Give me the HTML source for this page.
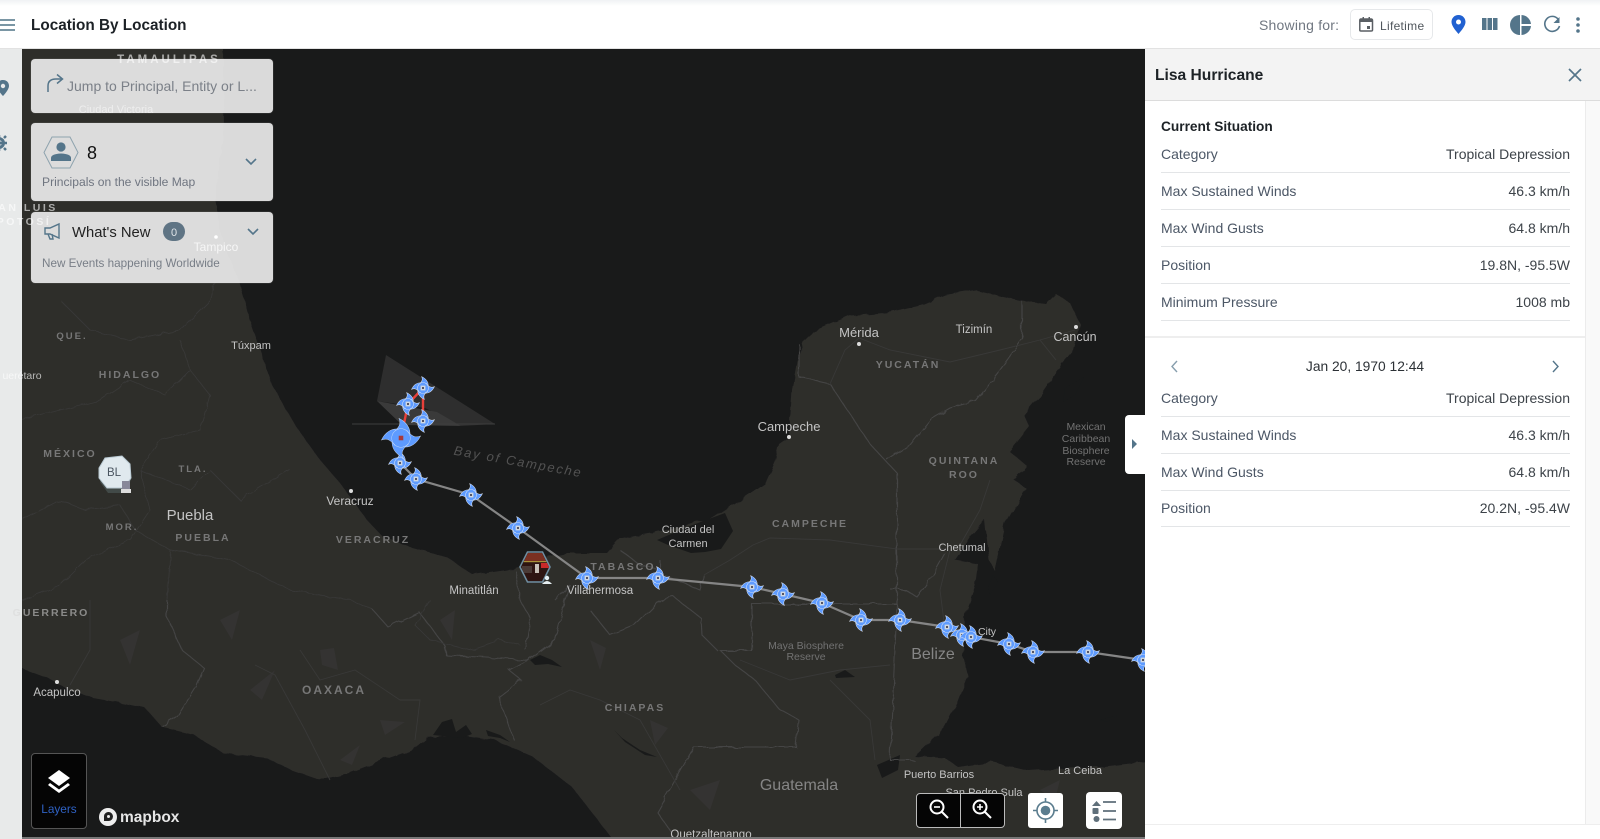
<!DOCTYPE html>
<html><head><meta charset="utf-8"><title>Location By Location</title>
<style>
html,body{margin:0;padding:0;width:1600px;height:839px;overflow:hidden;background:#fff;font-family:"Liberation Sans",sans-serif}
.a{position:absolute}
.t{position:absolute;white-space:nowrap;line-height:18px}
.panel{position:absolute;left:31px;width:242px;background:rgba(240,240,240,.9);border-radius:4px;box-shadow:0 0 1px #888}
.lb{position:absolute;left:1161px;font-size:14px;color:#4c5766;line-height:18px;white-space:nowrap}
.vl{position:absolute;right:30px;font-size:14px;color:#3d4349;line-height:18px;white-space:nowrap;text-align:right}
.ln{position:absolute;left:1161px;width:409px;height:1px;background:#e3e5e7}
svg text{font-family:"Liberation Sans",sans-serif}
.c{fill:#c4c4c4;font-size:12px;text-anchor:middle}
.s{fill:#777;font-size:10.5px;font-weight:bold;letter-spacing:2px;text-anchor:middle}
.n{fill:#727272;font-size:10.5px;text-anchor:middle}
.g{fill:#858585;font-size:16px;text-anchor:middle}
.b{fill:none;stroke:#454545;stroke-width:1.1}
.f{fill:none;stroke:#393938;stroke-width:.9}
</style></head><body>

<svg class="a" style="left:0;top:0" width="1600" height="839" viewBox="0 0 1600 839">
<defs>
<filter id="jag" x="-2%" y="-2%" width="104%" height="104%"><feTurbulence type="fractalNoise" baseFrequency=".09" numOctaves="2" seed="4" result="n"/><feDisplacementMap in="SourceGraphic" in2="n" scale="5"/></filter>
<g id="h">
<g id="arm"><path d="M5,-1.500 C5.500,-5.500 3,-9 -1,-11 C0,-8.500 -.5,-6.500 -4,-3.500 Z"/></g>
<use href="#arm" transform="rotate(90)"/><use href="#arm" transform="rotate(180)"/><use href="#arm" transform="rotate(270)"/>
<circle r="5.200"/>
</g>
<g id="hz">
<use href="#h" fill="#5e9bff" stroke="#e3e9f2" stroke-width=".9" style="paint-order:stroke"/>
<rect x="-2.400" y="-2.400" width="4.800" height="4.800" fill="#cfd8e2"/><rect x="-1" y="-1" width="2" height="2" fill="#556"/>
</g>
<clipPath id="hexc"><path d="M521,567 L528,553 L542,553 L549,567 L542,581 L528,581 Z"/></clipPath>
</defs>
<rect x="22" y="49" width="1123" height="790" fill="#191a1a"/>
<!-- land -->
<path filter="url(#jag)" fill="#2e2d2c" d="M8,35 L223,35 L223,49 L224,130 L215,200 L222,240 L240,283 L250,320 L262,355 L272,385 L295,425 L320,460 L340,483 L367,520 L383,537 L410,547 L447,557 L473,575 L507,570 L547,557 L567,553 L607,553 L620,538.500 L637,535 L659,531 L688,524 L715,517 L738,502 L765,484 L775,462 L779,444 L789,437 L792,390 L797,361 L803,344 L819,328 L850,315 L890,312 L924,304 L945,295 L975,290 L1022,301 L1046,304 L1056,294 L1070,303 L1080,324 L1073,350 L1056,372 L1039,397 L1024,415 L1029,426 L1009,451 L1027,466 L1014,480 L1026,488 L1005,524 L995,571 L989,560 L985,520 L972,535 L955,560 L978,564 L975,586 L965,615 L963,655 L968,676 L958,702 L945,727 L914,756 L945,758 L958,767 L992,762 L1029,771 L1059,769 L1100,767 L1160,760 L1160,855 L625,855 L572,787 L533,757 L494,740 L460,735 L427,738 L412,750 L383,760 L349,773 L320,780 L291,770 L267,758 L223,753 L194,735 L162,727 L145,708 L116,702 L87,697 L65,688 L48,678 L8,663 Z"/>
<!-- lagoons -->
<g fill="#191a1a">
<path d="M725,513 L733,531 L721,549 L705,552 L691,553 L668,545 L657,540 L690,526 Z"/>
<path d="M433,735 L442,722 L452,719 L456,732 L466,725 L472,734 L462,738 Z"/>
<path d="M486,730 L500,735 L510,742 L500,738 L488,736 Z"/>
<path d="M530,660 L540,655 L552,660 L562,667 L548,664 L535,665 Z"/>
<path d="M614,730 L625,742 L645,755 L657,757 L640,750 L622,738 Z"/>
<path d="M877,765 L900,755 L898,770 L882,778 Z"/>
<path d="M1065,388 L1084,377 L1075,395 L1063,402 Z"/>
<path d="M835,675 L845,670 L855,677 L836,678 Z"/>
<path d="M993,575 L998,582 L990,595 L988,588 Z"/>
<path d="M1100,720 L1118,715 L1108,722 Z"/>
</g>
<!-- terrain specks -->
<g fill="#343332">
<path d="M320,650 L334,648 L338,670 L322,665 Z"/><path d="M120,640 L140,630 L130,665 Z"/><path d="M380,720 L405,722 L385,735 Z"/>
<path d="M590,640 L606,648 L600,670 Z"/><path d="M250,690 L275,670 L262,700 Z"/><path d="M690,790 L720,780 L710,810 Z"/>
<path d="M650,720 L668,728 L655,745 Z"/><path d="M220,620 L240,610 L232,640 Z"/><path d="M1040,790 L1060,780 L1055,800 Z"/>
<path d="M340,760 L360,745 L352,765 Z"/><path d="M440,620 L455,610 L452,640 Z"/>
</g>
<!-- borders -->
<g filter="url(#jag)">
<path class="b" d="M694,747 L796,747 L799,720 L779,709 L755,680 L735,665 L721,651 L752,651 L752,604 L897,604 L897,473 L870,444 L830,384 L799,377 L799,344"/>
<path class="b" d="M694,747 L657,812 L671,832"/>
<path class="b" d="M897,604 L890,760 L914,760"/>
<path class="b" d="M890,589 L905,589 L917,597 L930,580 L945,553"/>
<path class="b" d="M1022,301 L1022,339 L1000,370 L975,401 L950,408 L931,419 L910,445 L887,460"/>
<path class="b" d="M167,600 L167,617 L182,650 L204,668 L196,687 L177,717 L162,727"/>
<path class="b" d="M373,610 L388,627 L419,612 L446,647 L446,655 L528,660 L509,670 L521,680 L499,697 L514,740"/>
<path class="b" d="M528,660 L555,640 L565,600 L570,585 L555,600"/>
<path class="b" d="M590,610 L610,635 L635,625 L660,600 L674,597 L701,618 L702,635 L718,651"/>
<path class="b" d="M620,550 L640,565 L660,570 L660,560 M664,575 L700,590 L704,575"/>
<path class="b" d="M515,570 L520,600 L530,618 L525,650"/>
<path class="f" d="M430,600 L415,625 L430,640 L470,650 L500,640 L520,645"/>
<path class="f" d="M22,600 L60,585 L85,560 L130,540 L150,510 L140,470 L160,440 L200,430 L210,395 L190,370"/>
<path class="f" d="M22,520 L60,500 L85,510 L120,505 L135,530 L170,550 L230,560 L290,590 L350,600 L373,610"/>
<path class="f" d="M140,470 L190,490 L210,470 L240,500 L290,470"/>
<path class="f" d="M170,550 L167,600"/>
<path class="f" d="M60,300 L90,330 L130,340 L180,330 L210,300 L215,280"/>
<path class="f" d="M22,420 L60,410 L100,400 L130,380 L165,395 L190,370 L180,340"/>
</g>
<g class="f">
<path d="M830,384 L845,350 L859,338 L890,350 L950,362 L1000,350 L1040,340 L1075,330"/>
<path d="M1040,340 L1056,360"/>
<path d="M753,545 L770,538 L830,540 L897,549 L945,549"/>
<path d="M704,575 L730,560 L753,545"/>
<path d="M950,550 L940,590 L945,630"/>
<path d="M990,480 L980,510 L960,545"/>
<path d="M300,650 L320,680 L355,670 L400,700 L420,700 L415,740"/>
<path d="M255,665 L275,675 L305,730 L330,780"/>
<path d="M540,705 L570,690 L600,700 L640,720 L680,790"/>
<path d="M740,660 L790,680 L840,670 L890,665"/>
<path d="M830,680 L870,720 L875,760"/>
<path d="M90,600 L90,650 L70,685"/>
</g>
<!-- forecast cone -->
<path d="M386,355 L495,424 L461,426 L425,408 L377,401 Z" fill="#2e2e2e"/>
<path d="M377,401 L437,412 L461,426 L402,425 Z" fill="#3a3a3a"/>
<path d="M352,424 L495,424" stroke="#3d3d3d" stroke-width="1"/>
<!-- track -->
<path d="M401,438 L400,463 L416,479 L471,495 L518,528 L587,578 L658,578 L752,587 L783,594 L822,603 L861,620 L900,620 L947,627 L971,637 L1009,644 L1033,652 L1088,652 L1143,660" fill="none" stroke="#858585" stroke-width="2.200"/>
<path d="M401,438 L408,404 L423,388 L423,421" fill="none" stroke="#e8403a" stroke-width="2.400"/>
<!-- map labels -->
<text class="c" x="251" y="349" style="font-size:11px">Túxpam</text>
<text class="s" x="72" y="339" style="font-size:9.500px">QUE.</text>
<text class="s" x="130" y="378">HIDALGO</text>
<text class="s" x="70" y="457">MÉXICO</text>
<text class="s" x="193" y="472" style="font-size:9.500px">TLA.</text>
<text class="s" x="122" y="530" style="font-size:9.500px">MOR.</text>
<text class="c" x="190" y="520" style="font-size:15px">Puebla</text>
<text class="s" x="203" y="541">PUEBLA</text>
<text class="c" x="350" y="505">Veracruz</text>
<text class="s" x="373" y="543">VERACRUZ</text>
<text class="c" x="474" y="594" style="font-size:11.500px">Minatitlán</text>
<text class="c" x="600" y="594" style="font-size:11.500px">Villahermosa</text>
<text class="s" x="623" y="570">TABASCO</text>
<text class="c" x="688" y="533" style="font-size:11px">Ciudad del</text>
<text class="c" x="688" y="547" style="font-size:11px">Carmen</text>
<text class="s" x="810" y="527">CAMPECHE</text>
<text class="c" x="789" y="431" style="font-size:13px">Campeche</text>
<text class="c" x="859" y="337" style="font-size:13px">Mérida</text>
<text class="c" x="974" y="333" style="font-size:11.500px">Tizimín</text>
<text class="c" x="1075" y="341" style="font-size:12.500px">Cancún</text>
<text class="s" x="908" y="368">YUCATÁN</text>
<text class="s" x="964" y="464">QUINTANA</text>
<text class="s" x="964" y="478">ROO</text>
<text class="n" x="1086" y="430">Mexican</text>
<text class="n" x="1086" y="442">Caribbean</text>
<text class="n" x="1086" y="454">Biosphere</text>
<text class="n" x="1086" y="465">Reserve</text>
<text class="c" x="962" y="551" style="font-size:11px">Chetumal</text>
<text class="c" x="987" y="635" style="font-size:10.500px">City</text>
<text class="g" x="933" y="659">Belize</text>
<text class="n" x="806" y="649">Maya Biosphere</text>
<text class="n" x="806" y="660">Reserve</text>
<text class="s" x="635" y="711">CHIAPAS</text>
<text class="s" x="334" y="694" style="font-size:12px">OAXACA</text>
<text class="c" x="57" y="696" style="font-size:11.500px">Acapulco</text>
<text class="g" x="799" y="790">Guatemala</text>
<text class="c" x="939" y="778" style="font-size:11px">Puerto Barrios</text>
<text class="c" x="984" y="796" style="font-size:11px">San Pedro Sula</text>
<text class="c" x="1080" y="774" style="font-size:11px">La Ceiba</text>
<text class="c" x="711" y="838" style="font-size:11.500px">Quetzaltenango</text>
<text x="518" y="466" text-anchor="middle" transform="rotate(10 518 463)" style="fill:#525252;font-size:13px;font-style:italic;letter-spacing:1.800px">Bay of Campeche</text>
<g fill="#ddd"><circle cx="57" cy="682" r="2"/><circle cx="351" cy="491" r="2"/><circle cx="789" cy="437" r="2"/><circle cx="859" cy="344" r="2"/><circle cx="1076" cy="327" r="2"/></g>
<!-- hurricanes -->
<use href="#hz" x="400" y="463"/><use href="#hz" x="416" y="479"/><use href="#hz" x="471" y="495"/><use href="#hz" x="518" y="528"/>
<use href="#hz" x="587" y="578"/><use href="#hz" x="658" y="578"/><use href="#hz" x="752" y="587"/><use href="#hz" x="783" y="594"/><use href="#hz" x="822" y="603"/><use href="#hz" x="861" y="620"/><use href="#hz" x="900" y="620"/><use href="#hz" x="947" y="627"/><use href="#hz" x="962" y="635"/><use href="#hz" x="971" y="637"/><use href="#hz" x="1009" y="644"/><use href="#hz" x="1033" y="652"/><use href="#hz" x="1088" y="652"/><use href="#hz" x="1143" y="660"/>
<use href="#hz" x="423" y="388"/><use href="#hz" x="408" y="404"/><use href="#hz" x="423" y="421"/>
<g transform="translate(401,438) scale(1.750)"><use href="#h" fill="#5e9bff" stroke="#dfe8f5" stroke-width=".4" style="paint-order:stroke"/><rect x="-1.300" y="-1.300" width="2.600" height="2.600" fill="#a83a3a"/></g>
<!-- BL marker -->
<path d="M103,465 L110,458 L120,458 L130,465 L131,480 L124,493 L108,493 L100,482 Z" fill="#566" opacity=".5"/>
<path d="M99,468 L105,458 L122,456 L130,464 L131,478 L124,488 L107,488 L99,478 Z" fill="#e0e9ee" stroke="#b9c9d2"/>
<text x="114" y="476" text-anchor="middle" style="font-size:11.500px;fill:#4a5560">BL</text>
<rect x="122" y="481" width="8" height="8" fill="#889"/><rect x="121" y="489" width="10" height="4" fill="#ddd"/>
<!-- photo marker -->
<path d="M520,567 L527.500,552 L542.500,552 L550,567 L542.500,582 L527.500,582 Z" fill="none" stroke="#6f8c9f" stroke-width="1.600"/>
<g clip-path="url(#hexc)"><rect x="520" y="552" width="30" height="30" fill="#2e1512"/><rect x="520" y="552" width="30" height="9" fill="#7a3022"/><rect x="522" y="566" width="10" height="7" fill="#4a3a36"/><rect x="535" y="564" width="4" height="9" fill="#c8c0b8"/><rect x="541" y="563" width="8" height="5" fill="#c82a2a"/><rect x="520" y="561" width="30" height="1.200" fill="#a89038"/></g>
<circle cx="547" cy="578" r="2.200" fill="#e6eef2"/><path d="M542,584 Q547,578 552,584 Z" fill="#e6eef2"/>
<!-- mapbox -->
<circle cx="108" cy="817" r="9" fill="#eee"/><path d="M104,821 V816 A4.500,4.500 0 1 1 108.500,821 Z" fill="#222"/><circle cx="108.500" cy="816.500" r="1.500" fill="#eee"/>
<text x="120" y="822" style="font-size:15.500px;font-weight:bold;fill:#e6e6e6">mapbox</text>
</svg>

<!-- sidebar -->
<div class="a" style="left:0;top:49px;width:22px;height:790px;background:#e8eaea"></div>
<svg class="a" style="left:0;top:75px" width="22" height="80"><path d="M3,5 C7,5 9,8 9,11 C9,14 5,19 3,21 C1,19 -3,14 -3,11 C-3,8 -1,5 3,5 Z" fill="#54758a"/><circle cx="3" cy="11" r="2.200" fill="#e8eaea"/><circle cx="-1" cy="68" r="4.500" fill="none" stroke="#54758a" stroke-width="3"/><path d="M-1,60 V76 M-8,68 H7 M4,63 L6,61 M4,73 L6,75" stroke="#54758a" stroke-width="2.500"/></svg>

<!-- header -->
<div class="a" style="left:0;top:0;width:1600px;height:49px;background:linear-gradient(#f0f2f4 0,#fff 6px);border-bottom:1px solid #e2e2e2;box-sizing:border-box"></div>
<svg class="a" style="left:0;top:18px" width="16" height="14"><path d="M0,2 H15 M0,7 H15 M0,12 H15" stroke="#4f7385" stroke-width="1.600"/></svg>
<div class="t" style="left:31px;top:17px;font-size:15.300px;font-weight:bold;color:#1c2126">Location By Location</div>
<div class="t" style="left:1259px;top:16px;font-size:14px;color:#707781;letter-spacing:.2px">Showing for:</div>
<div class="a" style="left:1350px;top:9px;width:83px;height:31px;border:1px solid #e6e8ea;border-radius:5px;box-sizing:border-box;background:#fff"></div>
<svg class="a" style="left:1359px;top:16px" width="16" height="17"><path d="M2,3 H12 Q13.500,3 13.500,4.500 V14 Q13.500,15 12,15 H2 Q.8,15 .8,14 V4.500 Q.8,3 2,3 Z" fill="none" stroke="#5a5f64" stroke-width="1.500"/><rect x="1" y="3" width="12" height="3" fill="#5a5f64"/><rect x="3.500" y="1" width="1.500" height="3" fill="#5a5f64"/><rect x="9.500" y="1" width="1.500" height="3" fill="#5a5f64"/><rect x="8" y="10" width="3" height="3" fill="#5a5f64"/></svg>
<div class="t" style="left:1380px;top:17px;font-size:12px;color:#50565c;letter-spacing:.3px">Lifetime</div>
<svg class="a" style="left:1450px;top:14px" width="160" height="22" viewBox="1450 14 160 22">
<path d="M1458.500,15 C1463,15 1465.500,18.500 1465.500,22 C1465.500,26 1461,31 1458.500,34 C1456,31 1451.500,26 1451.500,22 C1451.500,18.500 1454,15 1458.500,15 Z" fill="#2161d1"/><circle cx="1458.500" cy="22" r="2.500" fill="#fff"/>
<g fill="#54758a"><rect x="1482" y="18" width="4.500" height="12"/><rect x="1487.500" y="18" width="4.500" height="12"/><rect x="1493" y="18" width="4.500" height="12"/>
<path d="M1520,15 V35 A10,10 0 0 1 1520,15 Z"/><path d="M1521.500,15 A10,10 0 0 1 1531,24 H1521.500 Z"/><path d="M1521.500,26 H1531 A10,10 0 0 1 1521.500,35 Z"/>
<circle cx="1578" cy="19" r="1.800"/><circle cx="1578" cy="25" r="1.800"/><circle cx="1578" cy="31" r="1.800"/></g>
<path d="M1558,19 A7.500,7.500 0 1 0 1559.500,26" fill="none" stroke="#54758a" stroke-width="1.600"/><path d="M1559.500,17 V23 H1553.500 Z" fill="#54758a"/>
</svg>

<!-- overlay panels -->
<div class="panel" style="top:59px;height:54px"></div>
<div class="panel" style="top:123px;height:78px"></div>
<div class="panel" style="top:212px;height:71px"></div>
<svg class="a" style="left:31px;top:59px" width="242" height="224" viewBox="31 59 242 224">
<path d="M48,92 V86 Q48,79 56,79 H62" fill="none" stroke="#54758a" stroke-width="1.500"/><path d="M57,74.500 L62.500,79 L57,83.500" fill="none" stroke="#54758a" stroke-width="1.500"/>
<path d="M52,137 H70 L78,152.500 L70,168 H52 L44,152.500 Z" fill="none" stroke="#8ea3ae" stroke-width="1"/>
<circle cx="61" cy="147" r="4.600" fill="#54758a"/><path d="M51,161 V158 Q51,154 61,153.500 Q71,154 71,158 V161 Z" fill="#54758a"/>
<path d="M246,159 L251,164 L256,159" fill="none" stroke="#54758a" stroke-width="1.600"/>
<path d="M248,229 L253,234 L258,229" fill="none" stroke="#54758a" stroke-width="1.600"/>
<path d="M45,228 H50 L59,224 V238 L50,234 H45 Z M48,234 L50,239 H53 L52,234" fill="none" stroke="#54758a" stroke-width="1.400"/>
<rect x="163" y="222" width="22" height="19" rx="9.500" fill="#5f7484"/>
<text x="174" y="236" text-anchor="middle" style="font-size:11px;fill:#dfe4e8">0</text>
</svg>
<div class="t" style="left:67px;top:77px;font-size:14px;color:#7b8088">Jump to Principal, Entity or L...</div>
<div class="t" style="left:87px;top:144px;font-size:18px;color:#111">8</div>
<div class="t" style="left:42px;top:173px;font-size:12.100px;color:#6f7580">Principals on the visible Map</div>
<div class="t" style="left:72px;top:224px;font-size:14.800px;color:#222">What's New</div>
<div class="t" style="left:42px;top:255px;font-size:11.700px;color:#787e87">New Events happening Worldwide</div>
<svg class="a" style="left:0;top:49px" width="300" height="590" viewBox="0 49 300 590">
<text x="169" y="63" text-anchor="middle" style="font-size:11.500px;font-weight:bold;letter-spacing:3px;fill:rgba(255,255,255,.6)">TAMAULIPAS</text>
<text x="116" y="113" text-anchor="middle" style="font-size:11px;fill:rgba(255,255,255,.5)">Ciudad Victoria</text>
<text x="28" y="211" text-anchor="middle" style="font-size:10.500px;font-weight:bold;letter-spacing:2.500px;fill:rgba(255,255,255,.6)">AN LUIS</text>
<text x="24" y="225" text-anchor="middle" style="font-size:10.500px;font-weight:bold;letter-spacing:2.500px;fill:rgba(255,255,255,.6)">POTOSÍ</text>
<text x="216" y="251" text-anchor="middle" style="font-size:12px;fill:rgba(255,255,255,.75)">Tampico</text><circle cx="216" cy="237" r="1.800" fill="#fff"/>
<text x="22" y="379" text-anchor="middle" style="font-size:10.500px;fill:rgba(255,255,255,.65)">uerétaro</text>
<text x="51" y="616" text-anchor="middle" style="font-size:10.500px;font-weight:bold;letter-spacing:2px;fill:rgba(215,215,215,.55)">GUERRERO</text>
</svg>

<!-- layers -->
<div class="a" style="left:31px;top:753px;width:56px;height:76px;background:#050505;border:1px solid #555;border-radius:4px;box-sizing:border-box"></div>
<svg class="a" style="left:47px;top:768px" width="24" height="26"><path d="M12,2 L23,10 L12,18 L1,10 Z" fill="#fff"/><path d="M3,15 L12,21.500 L21,15 L23,17 L12,25 L1,17 Z" fill="#fff"/></svg>
<div class="t" style="left:31px;top:800px;width:56px;text-align:center;font-size:11.800px;color:#2f62c4">Layers</div>

<!-- zoom controls -->
<div class="a" style="left:916px;top:793px;width:89px;height:35px;background:#050505;border:1px solid #bbb;border-radius:4px;box-sizing:border-box"></div>
<div class="a" style="left:960px;top:793px;width:1px;height:35px;background:#bbb"></div>
<svg class="a" style="left:916px;top:793px" width="90" height="35" fill="none" stroke="#fff" stroke-width="2">
<circle cx="21" cy="14" r="6.500"/><path d="M26,19 L32,25"/><path d="M18,14 H24" stroke-width="1.600"/>
<circle cx="64" cy="14" r="6.500"/><path d="M69,19 L75,25"/><path d="M61,14 H67 M64,11 V17" stroke-width="1.600"/></svg>
<div class="a" style="left:1028px;top:793px;width:35px;height:35px;background:#fff;border-radius:3px"></div>
<svg class="a" style="left:1028px;top:793px" width="35" height="35"><circle cx="17.500" cy="17.500" r="8.500" fill="none" stroke="#5a7c8e" stroke-width="1.600"/><circle cx="17.500" cy="17.500" r="4.800" fill="#5a7c8e"/><path d="M17.500,5 V9 M17.500,26 V30 M5,17.500 H9 M26,17.500 H30" stroke="#5a7c8e" stroke-width="1.600"/></svg>
<div class="a" style="left:1086px;top:792px;width:36px;height:37px;background:#fff;border-radius:4px"></div>
<svg class="a" style="left:1086px;top:792px" width="36" height="37" fill="#5f6f7a"><path d="M10.500,9 L15,14 H6 Z"/><rect x="6.500" y="16" width="6" height="6" rx="1"/><circle cx="10.500" cy="27" r="3"/><path d="M17,10 H30 M17,19 H30 M17,27.500 H30" stroke="#5f6f7a" stroke-width="1.800"/></svg>

<!-- right panel -->
<div class="a" style="left:1145px;top:49px;width:455px;height:790px;background:#fff"></div>
<div class="a" style="left:1145px;top:49px;width:455px;height:52px;background:#f3f3f3;border-bottom:1px solid #dcdcdc;box-sizing:border-box"></div>
<div class="a" style="left:1585px;top:101px;width:15px;height:723px;background:#f9f9f9;border-left:1px solid #ececec;box-sizing:border-box"></div>
<div class="a" style="left:1145px;top:824px;width:455px;height:1px;background:#eee"></div>
<div class="t" style="left:1155px;top:67px;font-size:15.600px;font-weight:bold;color:#1d2226">Lisa Hurricane</div>
<svg class="a" style="left:1567px;top:67px" width="16" height="16"><path d="M2,2 L14,14 M14,2 L2,14" stroke="#54758a" stroke-width="1.700"/></svg>
<div class="t" style="left:1161px;top:118px;font-size:13.700px;font-weight:bold;color:#1d2226">Current Situation</div>
<div class="lb" style="top:145px">Category</div><div class="vl" style="top:145px">Tropical Depression</div><div class="ln" style="top:172px"></div>
<div class="lb" style="top:182px">Max Sustained Winds</div><div class="vl" style="top:182px">46.3 km/h</div><div class="ln" style="top:209px"></div>
<div class="lb" style="top:219px">Max Wind Gusts</div><div class="vl" style="top:219px">64.8 km/h</div><div class="ln" style="top:246px"></div>
<div class="lb" style="top:256px">Position</div><div class="vl" style="top:256px">19.8N, -95.5W</div><div class="ln" style="top:283px"></div>
<div class="lb" style="top:293px">Minimum Pressure</div><div class="vl" style="top:293px">1008 mb</div><div class="ln" style="top:320px"></div>
<div class="a" style="left:1145px;top:336px;width:440px;height:2px;background:#eee"></div>
<svg class="a" style="left:1168px;top:358px" width="395" height="18" fill="none" stroke="#54758a" stroke-width="1.400"><path d="M9,3 L4,8.500 L9,14" opacity=".7"/><path d="M385,3 L390,8.500 L385,14"/></svg>
<div class="t" style="left:1145px;width:440px;text-align:center;top:358px;font-size:13.800px;color:#2c3136">Jan 20, 1970 12:44</div>
<div class="lb" style="top:389px">Category</div><div class="vl" style="top:389px">Tropical Depression</div><div class="ln" style="top:416px"></div>
<div class="lb" style="top:426px">Max Sustained Winds</div><div class="vl" style="top:426px">46.3 km/h</div><div class="ln" style="top:453px"></div>
<div class="lb" style="top:463px">Max Wind Gusts</div><div class="vl" style="top:463px">64.8 km/h</div><div class="ln" style="top:490px"></div>
<div class="lb" style="top:499px">Position</div><div class="vl" style="top:499px">20.2N, -95.4W</div><div class="ln" style="top:526px"></div>

<!-- collapse tab -->
<div class="a" style="left:1125px;top:415px;width:20px;height:59px;background:#fff;border-radius:4px 0 0 4px"></div>
<svg class="a" style="left:1130px;top:438px" width="10" height="12"><path d="M2,1 L7,6 L2,11 Z" fill="#54758a"/></svg>
<div class="a" style="left:22px;top:837px;width:1123px;height:2px;background:#777"></div>
</body></html>
